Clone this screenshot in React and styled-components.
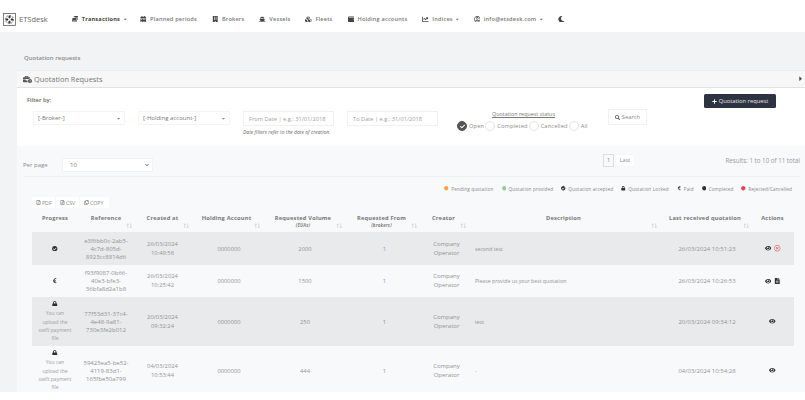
import React from 'react';
import styled, { createGlobalStyle } from 'styled-components';
import {
  FaCoins, FaCalendarAlt, FaBuilding, FaShip, FaCubes, FaWallet, FaChartLine, FaCaretDown, FaCaretRight,
  FaMoon, FaBusinessTime, FaSearch, FaPlus, FaCheck, FaRegFilePdf, FaRegFileAlt, FaRegCopy, FaCheckCircle,
  FaEuroSign, FaLock, FaEye, FaRegTimesCircle, FaFileAlt, FaLongArrowAltUp, FaLongArrowAltDown, FaCircle,
  FaRegUserCircle, FaChevronDown,
} from 'react-icons/fa';

const Global = createGlobalStyle`
  * { box-sizing: border-box; }
  html, body { margin: 0; padding: 0; background: #fff; }
  body { font-family: "Open Sans", "Liberation Sans", sans-serif; color: #888; }
`;

const Page = styled.div`
  width: 805px;
  height: 392px;
  overflow: hidden;
  background: #f2f3f5;
  opacity: 0.999;
`;

const TopBar = styled.nav`
  height: 32px;
  background: #fff;
  display: flex;
  align-items: center;
  padding: 6px 0 0 3px;
`;

const Logo = styled.svg`
  width: 13px;
  height: 13px;
  flex: none;
`;

const Brand = styled.span`
  font-size: 7.5px;
  color: #666;
  margin: 0 24px 0 3px;
`;

const NavItem = styled.span`
  display: flex;
  align-items: center;
  gap: 3.5px;
  font-size: 5.6px;
  letter-spacing: 0.2px;
  white-space: nowrap;
  margin-right: ${(p) => p.$gap}px;
  font-weight: ${(p) => (p.$active ? 700 : 600)};
  color: ${(p) => (p.$active ? '#444' : '#777')};
  svg { color: #444; font-size: 6.5px; flex: none; }
`;

const Caret = styled(FaCaretDown)`
  && { font-size: 4.5px; color: #555; margin-left: -1px; }
`;

const Crumb = styled.div`
  font-size: 6px;
  font-weight: 600;
  color: #8a8a8a;
  padding: 22px 0 0 24px;
  height: 38px;
`;

const Panel = styled.section`
  margin-left: 17px;
`;

const PanelHead = styled.header`
  height: 18px;
  background: #f7f7f7;
  border-top: 1px solid #ededed;
  border-bottom: 1px solid #e2e2e2;
  display: flex;
  align-items: center;
  padding: 0 1px 0 6px;
  font-size: 7.4px;
  color: #777;
  svg:first-child { color: #555; font-size: 9px; margin-right: 2px; }
`;

const HeadTitle = styled.span`
  flex: 1;
`;

const Filters = styled.div`
  height: 58px;
  background: #fff;
  padding: 8px 0 0 10px;
`;

const FilterLabel = styled.div`
  font-size: 5.8px;
  font-weight: 600;
  color: #666;
  height: 15px;
`;

const FilterRow = styled.div`
  display: flex;
  align-items: flex-start;
  padding-left: 6px;
`;

const SelectBox = styled.div`
  width: 92px;
  height: 14px;
  margin-right: 13px;
  border: 1px solid #f4f4f4;
  display: flex;
  align-items: center;
  justify-content: space-between;
  padding: 0 3px 0 4px;
  font-size: 6px;
  color: #777;
  svg { font-size: 5px; color: #888; }
`;

const DateCol = styled.div`
  width: 91px;
  margin-right: 13px;
`;

const DateInput = styled.div`
  width: 91px;
  height: 15px;
  border: 1px solid #f0f0f0;
  display: flex;
  align-items: center;
  padding-left: 5px;
  font-size: 5.7px;
  color: #a0a0a0;
  white-space: nowrap;
`;

const Hint = styled.div`
  font-size: 5px;
  font-style: italic;
  color: #666;
  margin-top: 3px;
  white-space: nowrap;
`;

const StatusCol = styled.div`
  margin-left: 19px;
  width: 133px;
  display: flex;
  flex-direction: column;
`;

const StatusTitle = styled.div`
  font-size: 5.4px;
  color: #777;
  text-decoration: underline;
  text-align: center;
  margin-bottom: 3px;
  height: 7px;
  line-height: 7px;
  white-space: nowrap;
`;

const Radios = styled.div`
  display: flex;
  align-items: center;
  font-size: 5.7px;
  color: #8a8a8a;
  letter-spacing: 0.15px;
`;

const Radio = styled.span`
  width: 10px;
  height: 10px;
  flex: none;
  border-radius: 50%;
  margin-right: 2px;
  border: 1px solid ${(p) => (p.$on ? '#555' : '#e4e4e4')};
  background: ${(p) => (p.$on ? '#555' : '#fff')};
  display: flex;
  align-items: center;
  justify-content: center;
  svg { font-size: 5px; color: #fff; }
`;

const RadioLabel = styled.span`
  margin-right: 1px;
`;

const SearchBtn = styled.div`
  width: 39px;
  height: 16px;
  margin: -2px 0 0 18px;
  border: 1px solid #f1f1f1;
  display: flex;
  align-items: center;
  justify-content: center;
  gap: 2px;
  font-size: 5.8px;
  color: #888;
  svg { font-size: 5px; color: #555; }
`;

const AddRow = styled.div`
  height: 0;
  display: flex;
  justify-content: flex-end;
  padding-right: 29px;
`;

const AddBtn = styled.div`
  width: 72px;
  height: 14px;
  margin-top: -2px;
  background: #2d3340;
  border-radius: 1.5px;
  color: #e8e8e8;
  display: flex;
  align-items: center;
  justify-content: center;
  gap: 2px;
  font-size: 5.8px;
  white-space: nowrap;
  svg { font-size: 5px; color: #fff; }
`;

const ListArea = styled.div`
  background: #f8f9fb;
  height: 246px;
  padding: 0 5px 0 6px;
  overflow: hidden;
`;

const PagerRow = styled.div`
  height: 31px;
  padding-top: 8px;
  display: flex;
  align-items: center;
  border-bottom: 1px solid #eeeff1;
  font-size: 6px;
  color: #8a8a8a;
`;

const PerPage = styled.span`
  width: 39px;
`;

const PerSelect = styled.div`
  width: 91px;
  height: 14px;
  background: #fff;
  border: 1px solid #f2f2f2;
  display: flex;
  align-items: center;
  justify-content: space-between;
  padding: 0 3px 0 7px;
  font-size: 6px;
  color: #777;
  margin-right: 450px;
  svg { font-size: 4px; color: #555; }
`;

const PageBtn = styled.span`
  width: ${(p) => p.$w}px;
  height: 13px;
  margin: -10px 1px 0 0;
  display: flex;
  align-items: center;
  justify-content: center;
  font-size: 5.6px;
  background: ${(p) => (p.$on ? '#f8f9fb' : '#fff')};
  border: 1px solid ${(p) => (p.$on ? '#ddd' : '#f6f6f6')};
`;

const Results = styled.span`
  margin: -9px 0 0 auto;
  font-size: 6.2px;
  color: #999;
`;

const Legend = styled.div`
  display: flex;
  justify-content: flex-end;
  align-items: center;
  gap: 8px;
  height: 23px;
  padding-right: 8px;
  font-size: 4.6px;
  letter-spacing: 0.15px;
  color: #888;
  white-space: nowrap;
`;

const LegendItem = styled.span`
  display: flex;
  align-items: center;
  gap: 2.5px;
  svg { font-size: 4.5px; color: ${(p) => p.$color || '#333'}; }
`;

const ExportBar = styled.div`
  display: flex;
  margin: -3px 0 0 9px;
  width: 78px;
  height: 11px;
  background: #fff;
`;

const ExportBtn = styled.span`
  display: flex;
  align-items: center;
  gap: 1.5px;
  padding-left: 3.5px;
  width: ${(p) => p.$w}px;
  font-size: 5.2px;
  color: #888;
  border-right: 1px solid #f6f6f6;
  svg { font-size: 5px; color: #666; }
`;

const Table = styled.div`
  margin-left: 9px;
  width: 762px;
  display: grid;
  grid-template-columns: 46px 56px 57px 71px 82px 75px 49px 191px 92px 43px;
`;

const Th = styled.div`
  position: relative;
  height: 24px;
  padding-top: 5.5px;
  text-align: center;
  font-size: 5.7px;
  font-weight: 700;
  letter-spacing: 0.2px;
  color: #777;
  white-space: nowrap;
`;

const ThSub = styled.div`
  font-size: 4.4px;
  font-style: italic;
  font-weight: 700;
  color: #808080;
  margin-top: 0.5px;
`;

const SortIcon = styled.span`
  position: absolute;
  right: 1px;
  bottom: 4px;
  display: flex;
  color: #d6d6d6;
  svg { font-size: 5.5px; margin-left: -2.5px; }
`;

const Row = styled.div`
  display: contents;
`;

const Td = styled.div`
  height: ${(p) => p.$h}px;
  background: ${(p) => (p.$alt ? '#e9eaec' : 'transparent')};
  display: flex;
  flex-direction: column;
  align-items: ${(p) => (p.$left ? 'flex-start' : 'center')};
  justify-content: center;
  padding-left: ${(p) => (p.$left ? 7 : p.$nudge || 0)}px;
  text-align: center;
  font-size: ${(p) => p.$size || 5.8}px;
  line-height: ${(p) => p.$lh || 8}px;
  color: #939393;
`;

const ProgressIcon = styled.span`
  display: flex;
  color: #2e2e2e;
  font-size: 5.5px;
  margin-bottom: ${(p) => (p.$note ? 3 : 0)}px;
`;

const Note = styled.div`
  font-size: 5px;
  line-height: 8.2px;
  color: #a0a0a0;
  white-space: nowrap;
`;

const Actions = styled.div`
  display: flex;
  align-items: center;
  gap: 3px;
  font-size: 6.5px;
  color: #333;
`;

const Cancel = styled(FaRegTimesCircle)`
  color: #e26a74;
`;

const rows = [
  {
    h: 33, alt: true, icon: <FaCheckCircle />,
    ref: ['e3f6bb0c-2ab5-', '4c7d-805d-', '8923cc8814d6'], at: ['26/03/2024', '10:49:58'], vol: '2000',
    desc: 'second test', last: '26/03/2024 10:51:23', extra: <Cancel />,
  },
  {
    h: 32, icon: <FaEuroSign />,
    ref: ['f93f9087-0b66-', '40e3-bfe3-', '36bfa8d2a1b8'], at: ['26/03/2024', '10:25:42'], vol: '1500',
    desc: 'Please provide us your best quotation', last: '26/03/2024 10:26:53', extra: <FaFileAlt />,
  },
  {
    h: 49, alt: true, icon: <FaLock />, note: true,
    ref: ['77f53d31-37c4-', '4e48-9a81-', '730e3fe2b012'], at: ['20/03/2024', '09:32:24'], vol: '250',
    desc: 'test', last: '20/03/2024 09:34:12',
  },
  {
    h: 49, icon: <FaLock />, note: true,
    ref: ['59425ea5-be52-', '4119-83d1-', '165fbe50a799'], at: ['04/03/2024', '10:53:44'], vol: '444',
    desc: '-', last: '04/03/2024 10:54:28',
  },
];

const nav = [
  { icon: <FaCalendarAlt />, label: 'Planned periods' },
  { icon: <FaBuilding />, label: 'Brokers' },
  { icon: <FaShip />, label: 'Vessels' },
  { icon: <FaCubes />, label: 'Fleets' },
  { icon: <FaWallet />, label: 'Holding accounts' },
];

const legend = [
  { icon: <FaCircle />, color: '#f4a04a', label: 'Pending quotation' },
  { icon: <FaCircle />, color: '#8fcf8f', label: 'Quotation provided' },
  { icon: <FaCheckCircle />, label: 'Quotation accepted' },
  { icon: <FaLock />, label: 'Quotation Locked' },
  { icon: <FaEuroSign />, label: 'Paid' },
  { icon: <FaCircle />, label: 'Completed' },
  { icon: <FaCircle />, color: '#e8415a', label: 'Rejected/Cancelled' },
];

const heads = [
  ['Progress'], ['Reference', null, true], ['Created at', null, true], ['Holding Account', null, true],
  ['Requested Volume', '(EUAs)', true], ['Requested From', '(brokers)', true], ['Creator', null, true],
  ['Description', null, true], ['Last received quotation', null, true], ['Actions'],
];

const Sort = () => (
  <SortIcon><FaLongArrowAltUp /><FaLongArrowAltDown /></SortIcon>
);

export default function App() {
  return (
    <Page>
      <Global />
      <TopBar>
        <Logo viewBox="0 0 26 26">
          <rect x="1" y="1" width="24" height="24" fill="none" stroke="#555" strokeWidth="1.5" />
          <circle cx="13" cy="13" r="8" fill="none" stroke="#666" strokeWidth="2" strokeDasharray="4 2" />
          <path d="M13 5l3 3-3 3-3-3zM13 15l3 3-3 3-3-3zM5 13l3-3 3 3-3 3zM15 13l3-3 3 3-3 3z" fill="#333" />
        </Logo>
        <Brand>ETSdesk</Brand>
        <NavItem $active $gap={13}><FaCoins />Transactions <Caret /></NavItem>
        {nav.map((n) => (
          <NavItem key={n.label} $gap={15}>{n.icon}{n.label}</NavItem>
        ))}
        <NavItem $gap={14}><FaChartLine />Indices <Caret /></NavItem>
        <NavItem $gap={15}><FaRegUserCircle />info@etsdesk.com <Caret /></NavItem>
        <NavItem><FaMoon /></NavItem>
      </TopBar>
      <Crumb>Quotation requests</Crumb>
      <Panel>
        <PanelHead>
          <FaBusinessTime />
          <HeadTitle>Quotation Requests</HeadTitle>
          <FaCaretRight color="#444" />
        </PanelHead>
        <Filters>
          <AddRow><AddBtn><FaPlus />Quotation request</AddBtn></AddRow>
          <FilterLabel>Filter by:</FilterLabel>
          <FilterRow>
            <SelectBox>[-Broker-]<FaCaretDown /></SelectBox>
            <SelectBox>[-Holding account-]<FaCaretDown /></SelectBox>
            <DateCol>
              <DateInput>From Date | e.g.: 31/01/2018</DateInput>
              <Hint>Date filters refer to the date of creation.</Hint>
            </DateCol>
            <DateInput>To Date | e.g.: 31/01/2018</DateInput>
            <StatusCol>
              <StatusTitle>Quotation request status</StatusTitle>
              <Radios>
                <Radio $on><FaCheck /></Radio><RadioLabel>Open</RadioLabel>
                <Radio /><RadioLabel>Completed</RadioLabel>
                <Radio /><RadioLabel>Cancelled</RadioLabel>
                <Radio /><RadioLabel>All</RadioLabel>
              </Radios>
            </StatusCol>
            <SearchBtn><FaSearch />Search</SearchBtn>
          </FilterRow>
        </Filters>
        <ListArea>
          <PagerRow>
            <PerPage>Per page</PerPage>
            <PerSelect>10<FaChevronDown /></PerSelect>
            <PageBtn $on $w={11}>1</PageBtn>
            <PageBtn $w={20}>Last</PageBtn>
            <Results>Results: 1 to 10 of 11 total</Results>
          </PagerRow>
          <Legend>
            {legend.map((l) => (
              <LegendItem key={l.label} $color={l.color}>{l.icon}{l.label}</LegendItem>
            ))}
          </Legend>
          <ExportBar>
            <ExportBtn $w={24}><FaRegFilePdf />PDF</ExportBtn>
            <ExportBtn $w={24}><FaRegFileAlt />CSV</ExportBtn>
            <ExportBtn $w={30}><FaRegCopy />COPY</ExportBtn>
          </ExportBar>
          <Table>
            {heads.map(([label, sub, sort]) => (
              <Th key={label}>
                {label}
                {sub && <ThSub>{sub}</ThSub>}
                {sort && <Sort />}
              </Th>
            ))}
            {rows.map((r) => (
              <Row key={r.ref[0]}>
                <Td $h={r.h} $alt={r.alt}>
                  <ProgressIcon $note={r.note}>{r.icon}</ProgressIcon>
                  {r.note && <Note>You can<br />upload the<br />swift payment<br />file</Note>}
                </Td>
                <Td $h={r.h} $alt={r.alt} $size={6}>{r.ref.map((x) => <span key={x}>{x}</span>)}</Td>
                <Td $h={r.h} $alt={r.alt} $lh={8.7}>{r.at.map((x) => <span key={x}>{x}</span>)}</Td>
                <Td $h={r.h} $alt={r.alt} $nudge={5}>0000000</Td>
                <Td $h={r.h} $alt={r.alt} $nudge={4}>{r.vol}</Td>
                <Td $h={r.h} $alt={r.alt} $nudge={6}>1</Td>
                <Td $h={r.h} $alt={r.alt} $lh={9} $size={6} $nudge={6}><span>Company</span><span>Operator</span></Td>
                <Td $h={r.h} $alt={r.alt} $left $size={5.2}>{r.desc}</Td>
                <Td $h={r.h} $alt={r.alt} $size={6} $nudge={4}>{r.last}</Td>
                <Td $h={r.h} $alt={r.alt}>
                  <Actions><FaEye />{r.extra}</Actions>
                </Td>
              </Row>
            ))}
          </Table>
        </ListArea>
      </Panel>
    </Page>
  );
}
